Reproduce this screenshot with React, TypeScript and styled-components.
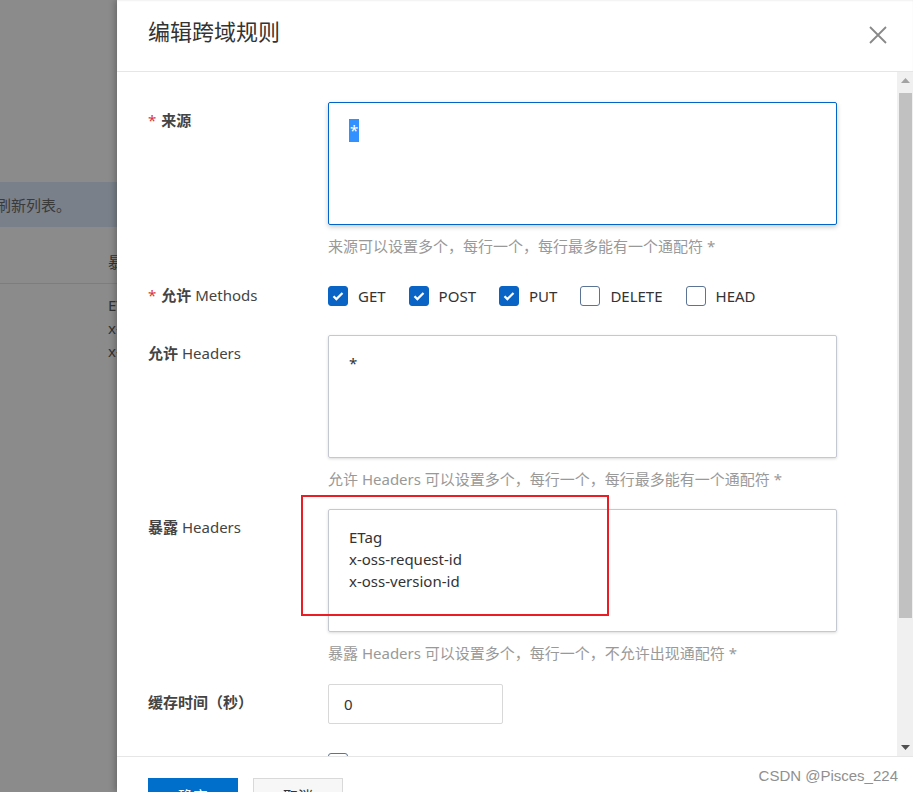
import React from "react";
import styled, { createGlobalStyle } from "styled-components";

const GlobalStyle = createGlobalStyle`
  html, body {
    margin: 0;
    padding: 0;
    background: #fff;
  }
  body {
    font-family: "Noto Sans", "Noto Sans CJK SC", sans-serif;
    font-size: 15px;
    color: #333;
  }
`;

const Page = styled.div`
  position: relative;
  display: flex;
  width: 913px;
  height: 792px;
  overflow: hidden;
`;

/* the list page under the overlay */
const Backdrop = styled.div`
  width: 117px;
  flex: none;
  background: #8b8b8b;
  overflow: hidden;
  display: flex;
  flex-direction: column;
  color: #333;
`;

const NoticeBand = styled.div`
  margin-top: 182px;
  height: 45px;
  background: #7a8089;
  display: flex;
  align-items: center;
  justify-content: flex-end;
  padding-right: 46px;
  white-space: nowrap;
  color: #3a3a3a;
`;

const TableHead = styled.div`
  height: 57px;
  box-sizing: border-box;
  display: flex;
  align-items: flex-end;
  padding: 0 0 10px 108px;
  line-height: 22px;
  border-bottom: 1px solid #7d7d7d;
  white-space: nowrap;
`;

const TableCell = styled.div`
  padding: 10px 0 0 108px;
  line-height: 23px;
  white-space: nowrap;
`;

const Drawer = styled.div`
  flex: 1;
  display: flex;
  flex-direction: column;
  background: #fff;
  box-shadow: -2px 0 6px rgba(0, 0, 0, 0.25);
  z-index: 1;
  min-width: 0;
`;

const DrawerHeader = styled.div`
  height: 71px;
  flex: none;
  display: flex;
  justify-content: space-between;
  align-items: flex-start;
  padding: 0 26px 0 31px;
  border-bottom: 1px solid #e6e6e6;
  box-shadow: inset 0 1px 2px rgba(0, 0, 0, 0.06);
`;

const Title = styled.h2`
  margin: 18px 0 0;
  font-size: 22px;
  line-height: 26px;
  font-weight: 400;
  color: #333;
`;

const CloseButton = styled.button`
  margin-top: 26px;
  width: 18px;
  height: 18px;
  padding: 0;
  border: 0;
  background: none;
  cursor: pointer;
  display: flex;
`;

const DrawerMain = styled.div`
  flex: 1;
  min-height: 0;
  display: flex;
`;

const Body = styled.div`
  flex: 1;
  overflow: hidden;
  padding: 30px 0 0 31px;
`;

const FormRow = styled.div`
  display: grid;
  grid-template-columns: 180px 509px;
  margin-bottom: 19.5px;
`;

const Label = styled.div`
  padding-top: 7px;
  line-height: 22px;
  color: #444;
  white-space: nowrap;
`;

const Required = styled.span`
  color: #d9363e;
  margin-right: 5px;
`;

const Strong = styled.span`
  font-weight: 700;
`;

const TextBox = styled.div<{ $focused?: boolean }>`
  box-sizing: border-box;
  height: 123px;
  padding: 16px 20px;
  line-height: 22px;
  color: #333;
  border: 1px solid ${(p) => (p.$focused ? "#0064c8" : "#c4c8d0")};
  border-radius: 2px;
  box-shadow: ${(p) =>
    p.$focused
      ? "0 2px 5px rgba(0, 0, 0, 0.22)"
      : "0 1px 3px rgba(0, 0, 0, 0.14)"};
`;

const Selected = styled.span`
  display: inline-block;
  background: #3390ff;
  color: #fff;
  line-height: 23px;
  padding: 0 1px;
`;

const Help = styled.div`
  margin-top: 10px;
  line-height: 22px;
  color: #999;
  white-space: nowrap;
`;

const CheckGroup = styled.div<{ $height?: number }>`
  height: ${(p) => p.$height ?? 40}px;
  display: flex;
  align-items: center;
  gap: 23px;
`;

const CheckItem = styled.label`
  display: flex;
  align-items: center;
  gap: 10px;
  color: #333;
  line-height: 22px;
`;

const Box = styled.span<{ $checked?: boolean }>`
  box-sizing: border-box;
  width: 20px;
  height: 20px;
  border-radius: 3px;
  display: flex;
  align-items: center;
  justify-content: center;
  background: ${(p) => (p.$checked ? "#0a64c6" : "#fff")};
  border: 1px solid ${(p) => (p.$checked ? "#0a64c6" : "#5b7494")};
`;

const NumberInput = styled.div`
  box-sizing: border-box;
  width: 175px;
  height: 40px;
  padding-left: 15px;
  line-height: 38px;
  border: 1px solid #d8d8d8;
  border-radius: 2px;
  color: #333;
`;

const ScrollRail = styled.div`
  width: 16px;
  flex: none;
  background: #f0f0f0;
  display: flex;
  flex-direction: column;
`;

const RailButton = styled.div`
  height: 17px;
  display: flex;
  align-items: center;
  justify-content: center;
`;

const Thumb = styled.div`
  height: 525px;
  margin: 4px 1px 0 2px;
  background: #c1c1c1;
`;

const RailSpacer = styled.div`
  flex: 1;
`;

const DrawerFooter = styled.div`
  flex: none;
  height: 36px;
  border-top: 1px solid #e6e6e6;
  padding: 21px 0 0 31px;
  box-sizing: border-box;
  display: flex;
  gap: 15px;
  overflow: hidden;
`;

const Button = styled.button<{ $primary?: boolean }>`
  flex: none;
  width: 90px;
  height: 40px;
  box-sizing: border-box;
  padding: 0 0 5px;
  font: inherit;
  border-radius: 0;
  border: 1px solid ${(p) => (p.$primary ? "#006fcc" : "#d9d9d9")};
  background: ${(p) => (p.$primary ? "#006fcc" : "#f7f7f7")};
  color: ${(p) => (p.$primary ? "#fff" : "#333")};
`;

const Annotation = styled.div`
  position: absolute;
  left: 301px;
  top: 495px;
  width: 308px;
  height: 121px;
  box-sizing: border-box;
  border: 2px solid #ec1c24;
  pointer-events: none;
  z-index: 2;
`;

const Watermark = styled.div`
  position: absolute;
  right: 15px;
  bottom: 7px;
  font-family: "Liberation Sans", Arial, sans-serif;
  font-size: 15px;
  line-height: 18px;
  color: #909090;
  z-index: 2;
`;

const Check = ({ checked, label }: { checked?: boolean; label?: string }) => (
  <CheckItem>
    <Box $checked={checked}>
      {checked && (
        <svg width="14" height="14" viewBox="0 0 14 14">
          <path
            d="M2.5 7.2l2.9 2.9L11.5 4"
            fill="none"
            stroke="#fff"
            strokeWidth="2.2"
          />
        </svg>
      )}
    </Box>
    {label}
  </CheckItem>
);

const methods = [
  { name: "GET", checked: true },
  { name: "POST", checked: true },
  { name: "PUT", checked: true },
  { name: "DELETE", checked: false },
  { name: "HEAD", checked: false },
];

const App = () => {
  return (
    <Page>
      <GlobalStyle />
      <Backdrop>
        <NoticeBand>后请刷新列表。</NoticeBand>
        <TableHead>暴露 Headers</TableHead>
        <TableCell>
          ETag
          <br />
          x-oss-request-id
          <br />
          x-oss-version-id
        </TableCell>
      </Backdrop>

      <Drawer>
        <DrawerHeader>
          <Title>编辑跨域规则</Title>
          <CloseButton aria-label="close">
            <svg width="18" height="18" viewBox="0 0 18 18">
              <path
                d="M1 1L17 17M17 1L1 17"
                stroke="#888"
                strokeWidth="1.8"
              />
            </svg>
          </CloseButton>
        </DrawerHeader>

        <DrawerMain>
          <Body>
            <FormRow>
              <Label>
                <Required>*</Required>
                <Strong>来源</Strong>
              </Label>
              <div>
                <TextBox $focused>
                  <Selected>*</Selected>
                </TextBox>
                <Help>来源可以设置多个，每行一个，每行最多能有一个通配符 *</Help>
              </div>
            </FormRow>

            <FormRow>
              <Label>
                <Required>*</Required>
                <Strong>允许</Strong> Methods
              </Label>
              <CheckGroup $height={38.5}>
                {methods.map((m) => (
                  <Check key={m.name} checked={m.checked} label={m.name} />
                ))}
              </CheckGroup>
            </FormRow>

            <FormRow>
              <Label>
                <Strong>允许</Strong> Headers
              </Label>
              <div>
                <TextBox>*</TextBox>
                <Help>
                  允许 Headers 可以设置多个，每行一个，每行最多能有一个通配符 *
                </Help>
              </div>
            </FormRow>

            <FormRow>
              <Label>
                <Strong>暴露</Strong> Headers
              </Label>
              <div>
                <TextBox>
                  ETag
                  <br />
                  x-oss-request-id
                  <br />
                  x-oss-version-id
                </TextBox>
                <Help>
                  暴露 Headers 可以设置多个，每行一个，不允许出现通配符 *
                </Help>
              </div>
            </FormRow>

            <FormRow>
              <Label>
                <Strong>缓存时间（秒）</Strong>
              </Label>
              <NumberInput>0</NumberInput>
            </FormRow>

            <FormRow>
              <Label />
              <CheckGroup>
                <Check />
              </CheckGroup>
            </FormRow>
          </Body>

          <ScrollRail>
            <RailButton>
              <svg width="9" height="5" viewBox="0 0 9 5">
                <path d="M0 5L4.5 0L9 5Z" fill="#a3a3a3" />
              </svg>
            </RailButton>
            <Thumb />
            <RailSpacer />
            <RailButton>
              <svg width="9" height="5" viewBox="0 0 9 5">
                <path d="M0 0L4.5 5L9 0Z" fill="#505050" />
              </svg>
            </RailButton>
          </ScrollRail>
        </DrawerMain>

        <DrawerFooter>
          <Button $primary>确定</Button>
          <Button>取消</Button>
        </DrawerFooter>
      </Drawer>

      <Annotation />
      <Watermark>CSDN @Pisces_224</Watermark>
    </Page>
  );
};

export default App;
